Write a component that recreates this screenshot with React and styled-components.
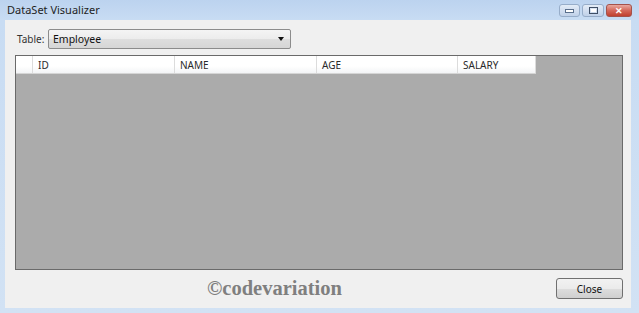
import React from "react";
import styled, { createGlobalStyle } from "styled-components";

const Global = createGlobalStyle`
  html, body { margin: 0; padding: 0; background: #c9dcf2; }
  body { font-family: "Noto Sans", "Open Sans", sans-serif; }
`;

const Frame = styled.div`
  width: 639px;
  height: 313px;
  box-sizing: border-box;
  display: flex;
  flex-direction: column;
  background: linear-gradient(180deg, #bcd3ef 0px, #c8dcf3 20px, #d2e2f4 100%);
  padding: 0 8px 5px 5px;
`;

const TitleBar = styled.div`
  height: 20px;
  display: flex;
  align-items: center;
  justify-content: space-between;
`;

const Title = styled.span`
  font-size: 11px;
  color: #1e1e1e;
  padding-left: 2px;
  margin-top: -1px;
`;

const Caption = styled.div`
  display: flex;
  gap: 2px;
  align-self: flex-start;
  margin-top: 4px;
  margin-right: -1px;
`;

const CapBtn = styled.div`
  width: ${(p) => p.$w}px;
  height: 13px;
  box-sizing: border-box;
  border: 1px solid ${(p) => (p.$close ? "#a4524b" : "#97adc9")};
  border-radius: 3px;
  background: ${(p) =>
    p.$close
      ? "linear-gradient(180deg,#e8a89f 0%,#d4685b 50%,#c0402f 100%)"
      : "linear-gradient(180deg,#e3ecf7 0%,#d2def0 50%,#c0d1e8 100%)"};
  display: flex;
  align-items: center;
  justify-content: center;
  color: #fff;
  font-size: 9px;
  font-weight: bold;
  line-height: 1;
`;

const Client = styled.div`
  flex: 1;
  background: #f0f0f0;
  display: flex;
  flex-direction: column;
  padding: 9px 8px 0 10px;
  box-sizing: border-box;
  min-height: 0;
`;

const Toolbar = styled.div`
  display: flex;
  align-items: center;
  height: 20px;
`;

const Label = styled.span`
  font-size: 10px;
  color: #333;
  margin-left: 2px;
  width: 31px;
`;

const Combo = styled.div`
  width: 243px;
  height: 20px;
  box-sizing: border-box;
  border: 1px solid #8c8c8c;
  border-radius: 2px;
  background: linear-gradient(180deg, #f4f4f4 0%, #ececec 50%, #dedede 51%, #d6d6d6 100%);
  display: flex;
  align-items: center;
  justify-content: space-between;
  padding: 0 6px 0 4px;
  font-size: 10.5px;
  color: #111;
`;

const Arrow = styled.span`
  width: 0;
  height: 0;
  border-left: 3px solid transparent;
  border-right: 3px solid transparent;
  border-top: 4px solid #111;
`;

const Grid = styled.div`
  margin-top: 6px;
  height: 215px;
  box-sizing: border-box;
  border: 1px solid #6a6a6a;
  background: #ababab;
  display: flex;
  flex-direction: column;
  align-items: flex-start;
`;

const HeaderRow = styled.div`
  display: flex;
  height: 17px;
  background: linear-gradient(180deg, #ffffff 0%, #ffffff 60%, #f3f4f6 100%);
  border-bottom: 1px solid #d5d5d5;
`;

const HeaderCell = styled.div`
  width: ${(p) => p.$w}px;
  box-sizing: border-box;
  border-right: 1px solid #dcdcdc;
  font-size: 10px;
  color: #2a2a2a;
  padding-left: 5px;
  display: flex;
  align-items: center;
  white-space: nowrap;
`;

const Footer = styled.div`
  flex: 1;
  display: flex;
  align-items: center;
  justify-content: space-between;
  padding-bottom: 3px;
`;

const Watermark = styled.span`
  font-family: "Liberation Serif", "DejaVu Serif", serif;
  font-weight: bold;
  font-size: 20.5px;
  color: #7f7f7f;
  margin-left: 192px;
  margin-top: 2px;
`;

const Button = styled.button`
  width: 67px;
  height: 21px;
  box-sizing: border-box;
  border: 1px solid #707070;
  border-radius: 3px;
  background: linear-gradient(180deg, #f2f2f2 0%, #ebebeb 50%, #dddddd 51%, #cfcfcf 100%);
  font-family: "Noto Sans", "Open Sans", sans-serif;
  font-size: 10px;
  color: #111;
  padding: 0;
  margin-top: 2px;
`;

const columns = [
  { name: "", w: 17 },
  { name: "ID", w: 142 },
  { name: "NAME", w: 142 },
  { name: "AGE", w: 141 },
  { name: "SALARY", w: 78 },
];

export default function App() {
  return (
    <>
      <Global />
      <Frame>
        <TitleBar>
          <Title>DataSet Visualizer</Title>
          <Caption>
            <CapBtn $w={21}>
              <svg width="9" height="4" viewBox="0 0 9 4"><rect x="0.5" y="0.5" width="8" height="3" fill="#fff" stroke="#5a6f8c" /></svg>
            </CapBtn>
            <CapBtn $w={22}>
              <svg width="9" height="7" viewBox="0 0 9 7"><rect x="0.5" y="0.5" width="8" height="6" fill="none" stroke="#3f4f66" /><rect x="2" y="2" width="5" height="3" fill="#fff" /></svg>
            </CapBtn>
            <CapBtn $w={26} $close>
              ✕
            </CapBtn>
          </Caption>
        </TitleBar>
        <Client>
          <Toolbar>
            <Label>Table:</Label>
            <Combo>
              <span>Employee</span>
              <Arrow />
            </Combo>
          </Toolbar>
          <Grid>
            <HeaderRow>
              {columns.map((c, i) => (
                <HeaderCell key={i} $w={c.w}>{c.name}</HeaderCell>
              ))}
            </HeaderRow>
          </Grid>
          <Footer>
            <Watermark>©codevariation</Watermark>
            <Button>Close</Button>
          </Footer>
        </Client>
      </Frame>
    </>
  );
}
